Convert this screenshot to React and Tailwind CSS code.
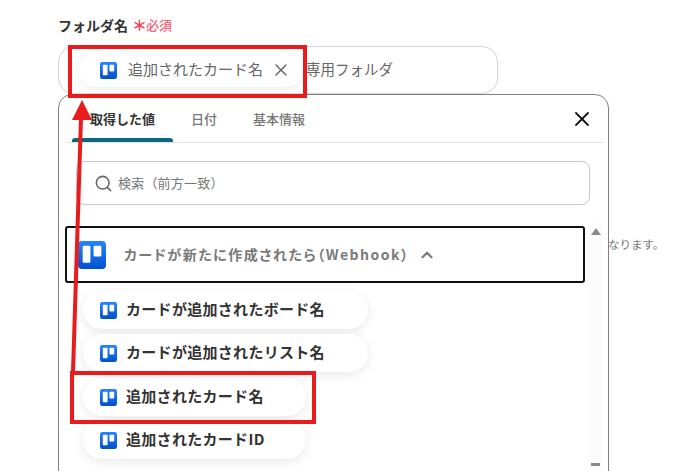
import React from 'react';
import { Search, X, ChevronUp } from 'lucide-react';

const TrelloIcon = ({ size = 18 }) => (
  <svg width={size} height={size} viewBox="0 0 18 18" className="shrink-0">
    <defs>
      <linearGradient id="trello-grad" x1="0" y1="0" x2="0" y2="1">
        <stop offset="0" stopColor="#2684ff" />
        <stop offset="1" stopColor="#0052cc" />
      </linearGradient>
    </defs>
    <rect width="18" height="18" rx="2.5" fill="url(#trello-grad)" />
    <rect x="3" y="3" width="5" height="11" rx="0.8" fill="#fff" />
    <rect x="10" y="3" width="5" height="7" rx="0.8" fill="#fff" />
  </svg>
);

const items = [
  { label: 'カードが追加されたボード名', w: 'w-[285px]', mt: 'mt-0' },
  { label: 'カードが追加されたリスト名', w: 'w-[285px]', mt: 'mt-[5px]' },
  { label: '追加されたカード名', w: 'w-[223px]', mt: 'mt-[6px]' },
  { label: '追加されたカードID', w: 'w-[223px]', mt: 'mt-[5px]' },
];

export default function App() {
  return (
    <div className="relative h-[471px] w-[674px] overflow-hidden bg-white font-['Noto_Sans_CJK_JP','Noto_Sans',sans-serif]">
      <div className="pl-[58px] pt-[14px]">
        {/* ラベル */}
        <div className="flex h-[22px] items-center">
          <span className="text-[14px] leading-[22px] font-bold text-[#333]">フォルダ名</span>
          <span className="ml-[4px] text-[15px] leading-[22px] font-bold text-[#f5405e]">＊</span>
          <span className="-ml-[1px] text-[13px] leading-[22px] font-medium text-[#f5607a]">必須</span>
        </div>

        {/* 入力欄 */}
        <div className="mt-[10px] flex h-[48px] w-[440px] items-center rounded-[16px] border border-[#d4d4d8] pl-[20px]">
          <div className="flex h-[33px] w-[224px] items-center rounded-full bg-white pl-[21px] shadow-[0_2px_8px_rgba(0,0,0,0.08)]">
            <TrelloIcon size={17} />
            <span className="ml-[11px] pb-[1px] text-[15px] text-[#666]">追加されたカード名</span>
            <X size={20} strokeWidth={1.7} className="ml-[8px] text-[#666]" />
          </div>
          <span className="ml-[3px] pb-[3px] text-[14.5px] text-[#666]">専用フォルダ</span>
        </div>

        {/* パネル */}
        <div className="h-[420px] w-[551px] rounded-t-[14px] border border-[#808080] bg-white pl-[7px]">
          <div className="relative flex h-[48px] w-[538px] items-center border-b border-[#e4e4e7] pl-[24px] pr-[10px]">
            <span className="text-[13px] font-bold text-[#333]">取得した値</span>
            <span className="ml-[36px] text-[13px] font-medium text-[#777]">日付</span>
            <span className="ml-[36px] text-[13px] font-medium text-[#777]">基本情報</span>
            <X size={24} strokeWidth={1.8} className="ml-auto text-[#111]" />
            <div className="absolute bottom-0 left-[6px] h-[4px] w-[101px] rounded-t-[3px] bg-[#0b6880]" />
          </div>

          <div className="ml-[10px] mt-[18px] flex h-[44px] w-[514px] items-center rounded-[8px] border border-[#c8c8cc] pl-[17px]">
            <Search size={19} strokeWidth={2} className="text-[#666]" />
            <span className="ml-[5px] text-[13px] tracking-[0.2px] text-[#777]">検索（前方一致）</span>
          </div>

          <div className="flex">
            <div className="w-[520px]">
              <div className="-ml-[1px] mt-[21px] flex h-[57px] w-[520px] items-center rounded-[3px] border-2 border-[#111] pl-[11px]">
                <TrelloIcon size={28} />
                <span className="ml-[18px] pb-[1px] text-[14px] font-bold tracking-[1.5px] whitespace-nowrap text-[#7a7a7a] [font-feature-settings:'palt']">カードが新たに作成されたら（Webhook）</span>
                <ChevronUp size={18} strokeWidth={3} className="ml-[8px] text-[#7a7a7a]" />
              </div>
              <div className="mt-[8px] pl-[17px]">
                {items.map(item => (
                  <div
                    key={item.label}
                    className={`flex h-[38px] items-center rounded-full bg-white pl-[17px] shadow-[0_3px_12px_rgba(0,0,0,0.09)] ${item.w} ${item.mt}`}
                  >
                    <TrelloIcon size={17} />
                    <span className="ml-[9px] pb-[1px] text-[15px] font-bold tracking-[0.3px] whitespace-nowrap text-[#333]">{item.label}</span>
                  </div>
                ))}
              </div>
            </div>
            {/* スクロールバー */}
            <div className="ml-[2px] mt-[18px] flex h-[260px] w-[15px] flex-col items-center bg-[#fcfcfc] pt-[5px]">
              <div className="h-0 w-0 border-x-[5px] border-b-[7px] border-x-transparent border-b-[#8a8a8a]" />
              <div className="mt-auto mb-[17px] h-[3px] w-[9px] bg-[#8a8a8a]" />
            </div>
          </div>
        </div>
      </div>

      {/* パネルの裏に見える文字 */}
      <span className="absolute left-[608px] top-[236px] text-[11.5px] text-[#777]">なります。</span>

      {/* 赤い注釈 */}
      <div className="absolute left-[68px] top-[45px] h-[53px] w-[239px] border-4 border-[#e81c1c]" />
      <div className="absolute left-[70px] top-[371px] h-[53px] w-[246px] border-4 border-[#e81c1c]" />
      <svg className="absolute left-0 top-0" width="674" height="471">
        <line x1="73" y1="372" x2="81" y2="118" stroke="#e81c1c" strokeWidth="4" />
        <polygon points="82,100 72,120 92,120" fill="#e81c1c" />
      </svg>
    </div>
  );
}
